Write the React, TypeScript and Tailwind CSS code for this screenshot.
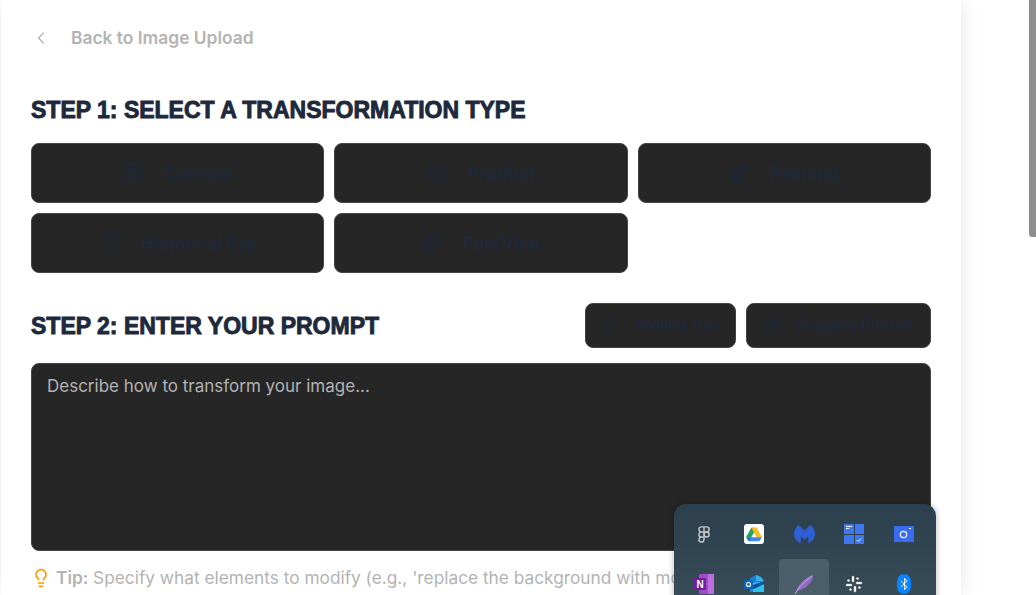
import { Box, ChevronLeft, Clock, Image, Lightbulb, Paintbrush, Sparkles, WandSparkles } from 'lucide-react';

const types = [
  { label: 'Cartoon', icon: Image },
  { label: 'Product', icon: Box },
  { label: 'Painting', icon: Paintbrush },
  { label: 'Historical Era', icon: Clock },
  { label: 'Fun/Viral', icon: Sparkles },
];

function FigmaIcon() {
  return (
    <svg viewBox="0 0 14 20" className="h-[17px] w-[12px]" fill="none" stroke="#c2c8cb" strokeWidth="1.7">
      <path d="M7 1H4a3 3 0 0 0 0 6h3zM7 7H4a3 3 0 0 0 0 6h3zM7 13H4a3 3 0 1 0 3 3zM7 1h3a3 3 0 0 1 0 6H7z" />
      <circle cx="10" cy="10" r="3" />
    </svg>
  );
}

function DriveIcon() {
  return (
    <div className="flex h-5 w-5 items-center justify-center rounded-[3px] bg-white">
      <svg viewBox="0 0 24 22" className="h-[15px] w-[16px]">
        <path d="M8 1h8l-8 14H0z" fill="#1fa463" />
        <path d="M8 1h8l8 14h-8z" fill="#f6bf26" />
        <path d="M4 15h20l-4 6H4z" fill="#4285f4" />
        <path d="M0 15h8l-4 6z" fill="#1a73c8" />
      </svg>
    </div>
  );
}

function MalwarebytesIcon() {
  return (
    <svg viewBox="0 0 22 20" className="h-[19px] w-[21px]">
      <path d="M5 0C2 2 0 5 0 9c0 5 3 9 7 10v-7l4 3.500 4-3.500v7c4-1 7-5 7-10 0-4-2-7-5-9l-6 6z" fill="#2f5fd6" />
    </svg>
  );
}

function TasksIcon() {
  return (
    <div className="grid h-5 w-5 grid-cols-2 gap-px">
      <div className="bg-[#3f78ee] p-[2px]">
        <div className="h-px w-[6px] bg-white" />
        <div className="mt-px h-px w-[3px] bg-white" />
      </div>
      <div className="bg-[#3f78ee]" />
      <div className="bg-[#3f78ee]" />
      <div className="flex items-center justify-center bg-[#3f78ee]">
        <svg viewBox="0 0 8 8" className="h-[6px] w-[6px]" fill="none" stroke="#fff" strokeWidth="1.3">
          <path d="M1 4l2 2 4-4" />
        </svg>
      </div>
    </div>
  );
}

function CameraIcon() {
  return (
    <svg viewBox="0 0 20 16" className="h-4 w-5">
      <rect width="20" height="16" fill="#3a6cf0" />
      <circle cx="9.500" cy="8.500" r="3.200" fill="none" stroke="#fff" strokeWidth="1.200" />
      <rect x="15" y="2" width="2" height="1" fill="#fff" />
    </svg>
  );
}

function OneNoteIcon() {
  return (
    <svg viewBox="0 0 20 20" className="h-5 w-5">
      <rect x="5" y="0" width="15" height="20" rx="1" fill="#a34bc9" />
      <rect x="14" y="0" width="6" height="20" fill="#bb6de0" />
      <rect x="0" y="4" width="12" height="12" rx="1" fill="#6d1f9e" />
      <text x="6" y="13.500" textAnchor="middle" fill="#fff" fontSize="10" fontWeight="700" fontFamily="Liberation Sans, sans-serif">N</text>
    </svg>
  );
}

function OutlookIcon() {
  return (
    <svg viewBox="0 0 20 20" className="h-5 w-5">
      <path d="M6 4l6-3 5 2 3 4v11H6z" fill="#1c7fd6" />
      <path d="M12 1l5 2 3 4h-8z" fill="#35b0ee" />
      <path d="M9 9l11-2v11H9z" fill="#2cc4ee" />
      <path d="M6 12l14-5v3L10 15z" fill="#0f4f9e" />
      <rect x="0" y="6" width="9" height="9" rx="1" fill="#0f67b8" />
      <circle cx="4.500" cy="10.500" r="2" fill="none" stroke="#fff" strokeWidth="1.100" />
    </svg>
  );
}

function FeatherIcon() {
  return (
    <svg viewBox="0 0 20 20" className="h-5 w-5">
      <path d="M1 20C3 12 10 4 19 1c0 5-3 9-7 12-3 2-6 3-9 4z" fill="#8f6cc0" />
      <path d="M1 20C5 13 10 8 18 2" fill="none" stroke="#d6bdf0" strokeWidth="0.800" />
    </svg>
  );
}

function SlackIcon() {
  return (
    <svg viewBox="0 0 18 18" className="h-[18px] w-[18px]" fill="#f3f4f4" stroke="#1b2a33" strokeWidth="0.5">
      <rect x="6.500" y="0.500" width="3" height="7" rx="1.500" />
      <rect x="10.500" y="6.500" width="7" height="3" rx="1.500" />
      <rect x="8.500" y="10.500" width="3" height="7" rx="1.500" />
      <rect x="0.500" y="8.500" width="7" height="3" rx="1.500" />
      <circle cx="3.500" cy="5.500" r="1.600" />
      <circle cx="12.500" cy="3.500" r="1.600" />
      <circle cx="14.500" cy="12.500" r="1.600" />
      <circle cx="5.500" cy="14.500" r="1.600" />
    </svg>
  );
}

function BluetoothIcon() {
  return (
    <div className="flex h-5 w-[14px] items-center justify-center rounded-[7px] bg-[#0a84ff]">
      <svg viewBox="0 0 10 16" className="h-[14px] w-[9px]" fill="none" stroke="#fff" strokeWidth="1.100">
        <path d="M1 4.500l7 7L5 14.500v-13l3 3-7 7" />
      </svg>
    </div>
  );
}

const trayIcons = [FigmaIcon, DriveIcon, MalwarebytesIcon, TasksIcon, CameraIcon, OneNoteIcon, OutlookIcon, FeatherIcon, SlackIcon, BluetoothIcon];

const headingClass =
  "text-[23px] leading-8 font-bold text-slate-800 uppercase font-['Liberation_Sans',sans-serif] [-webkit-text-stroke:0.9px_#1e293b]";

export default function App() {
  return (
    <div className="relative h-[595px] w-[1036px] overflow-hidden bg-white font-['Inter',sans-serif]">
      <div className="ml-px h-full w-[960px] bg-white px-[30px] pt-[20px] shadow-[0_0_20px_rgba(0,0,0,0.1)]">
        <a className="flex h-9 items-center gap-5 text-[17.4px] font-semibold text-[#b3b3b3]">
          <ChevronLeft className="h-5 w-5 stroke-[1.5]" />
          <span>Back to Image Upload</span>
        </a>

        <h2 className={`mt-[38px] ${headingClass}`}>Step 1: Select a transformation type</h2>
        <div className="mt-[17px] grid w-[900px] grid-cols-3 gap-[10px]">
          {types.map(t => (
            <button
              key={t.label}
              className="flex h-[60px] items-center justify-center gap-5 rounded-lg border border-[#444] bg-[#262626] text-[18px] font-medium text-slate-800"
            >
              <t.icon className="h-[22px] w-[22px] stroke-[1.75]" />
              <span>{t.label}</span>
            </button>
          ))}
        </div>

        <div className="mt-[30px] flex w-[900px] items-center justify-between">
          <h2 className={headingClass}>Step 2: Enter your prompt</h2>
          <div className="flex gap-[10px]">
            <button className="flex h-[45px] w-[151px] items-center justify-center gap-[18px] rounded-lg border border-[#444] bg-[#262626] text-[14.6px] font-medium text-slate-800">
              <Lightbulb className="h-[18px] w-[18px] stroke-[1.75]" />
              Writing Tips
            </button>
            <button className="flex h-[45px] w-[185px] items-center justify-center gap-[16px] rounded-lg border border-[#444] bg-[#262626] text-[15.300px] font-medium text-slate-800">
              <WandSparkles className="h-[18px] w-[18px] stroke-[1.75]" />
              Suggest Prompt
            </button>
          </div>
        </div>

        <div className="mt-[15px] h-[188px] w-[900px] rounded-lg border border-[#444] bg-[#262626] px-[15px] py-[10px] text-[17px] text-[#b3b3b3]">
          Describe how to transform your image...
        </div>

        <p className="mt-[14px] flex items-center gap-[5px] text-[17.300px] whitespace-nowrap text-[#b3b3b3]">
          <Lightbulb className="h-5 w-5 text-amber-500" />
          <span>
            <strong className="font-semibold">Tip:</strong> Specify what elements to modify (e.g., 'replace the background with mountains')
          </span>
        </p>
      </div>

      {/* page scrollbar */}
      <div className="absolute top-0 right-0 h-[237px] w-[7px] rounded-bl-[3px] bg-[#8f8f8f]" />

      {/* system tray flyout */}
      <div className="absolute top-[504px] left-[674px] h-[120px] w-[262px] rounded-xl bg-gradient-to-b from-[#2b3f4c] to-[#3a505a] px-[5px] pt-[5px] shadow-[0_0_6px_rgba(0,0,0,0.3)]">
        <div className="grid grid-cols-[repeat(5,50px)] grid-rows-[repeat(2,50px)]">
          {trayIcons.map((Icon, i) => (
            <div key={i} className={`flex items-center justify-center rounded ${i === 7 ? 'bg-[#4a5f6a]' : ''}`}>
              <Icon />
            </div>
          ))}
        </div>
      </div>
    </div>
  );
}
